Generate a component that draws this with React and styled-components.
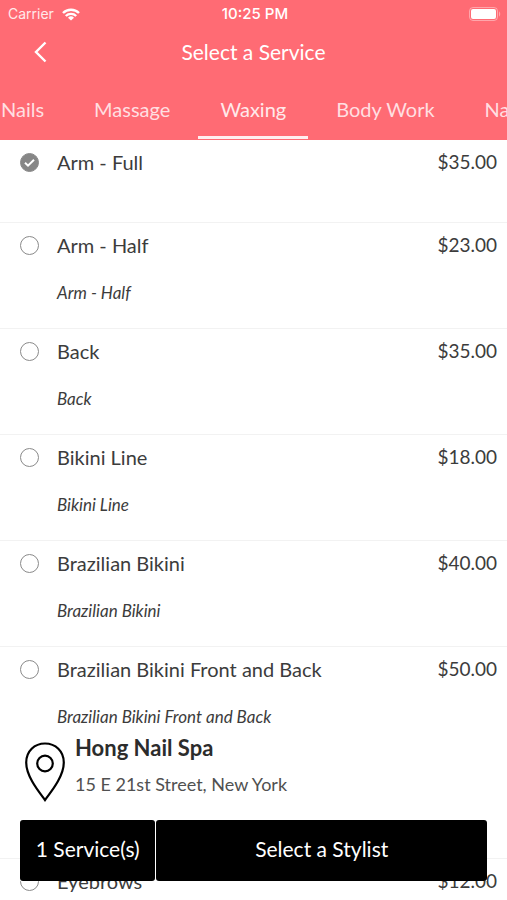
import React, { useLayoutEffect, useRef, useState } from "react";
import styled, { createGlobalStyle } from "styled-components";

const tabs = ["Nails", "Massage", "Waxing", "Body Work", "Nail Art"];

const services = [
  { id: "arm-full", name: "Arm - Full", price: "$35.00" },
  { id: "arm-half", name: "Arm - Half", price: "$23.00", details: "Arm - Half" },
  { id: "back", name: "Back", price: "$35.00", details: "Back" },
  { id: "bikini", name: "Bikini Line", price: "$18.00", details: "Bikini Line" },
  { id: "brazilian", name: "Brazilian Bikini", price: "$40.00", details: "Brazilian Bikini" },
  {
    id: "brazilian-fb",
    name: "Brazilian Bikini Front and Back",
    price: "$50.00",
    details: "Brazilian Bikini Front and Back",
  },
  { id: "chest", name: "Chest", price: "$35.00", details: "Chest" },
  { id: "eyebrows", name: "Eyebrows", price: "$12.00", details: "Eyebrows" },
];

export default function App() {
  const [activeTab, setActiveTab] = useState("Waxing");
  const [selected, setSelected] = useState(["arm-full"]);
  const tabsRef = useRef(null);

  // keep the active tab in the middle of the strip
  useLayoutEffect(() => {
    const strip = tabsRef.current;
    const tab = strip.querySelector("[aria-selected='true']");
    const stripBox = strip.getBoundingClientRect();
    const tabBox = tab.getBoundingClientRect();
    strip.scrollLeft +=
      tabBox.left + tabBox.width / 2 - (stripBox.left + stripBox.width / 2);
  }, [activeTab]);

  const toggle = (id) =>
    setSelected((prev) =>
      prev.includes(id) ? prev.filter((item) => item !== id) : [...prev, id]
    );

  return (
    <Screen>
      <GlobalStyle />
      <Header>
        <StatusBar>
          <Carrier>
            Carrier
            <WifiIcon />
          </Carrier>
          <Time>10:25 PM</Time>
          <BatteryIcon />
        </StatusBar>
        <TitleBar>
          <BackButton type='button' aria-label='Back'>
            <svg width='14' height='22' viewBox='0 0 14 22' fill='none'>
              <path d='M12.5 1.5L3 11l9.5 9.5' stroke='currentColor' strokeWidth='2.4' />
            </svg>
          </BackButton>
          <Title>Select a Service</Title>
        </TitleBar>
        <Tabs role='tablist' ref={tabsRef}>
          {tabs.map((tab) => (
            <Tab
              key={tab}
              type='button'
              role='tab'
              aria-selected={tab === activeTab}
              $active={tab === activeTab}
              onClick={() => setActiveTab(tab)}>
              {tab}
            </Tab>
          ))}
        </Tabs>
      </Header>
      <ServiceList>
        {services.map(({ id, name, price, details }) => (
          <ServiceRow key={id}>
            <ServiceLine>
              <CheckWrap>
                <Check
                  type='checkbox'
                  id={id}
                  checked={selected.includes(id)}
                  onChange={() => toggle(id)}
                />
                {selected.includes(id) && <Tick />}
              </CheckWrap>
              <ServiceName htmlFor={id}>{name}</ServiceName>
              <Price>{price}</Price>
            </ServiceLine>
            {details && <Details>{details}</Details>}
          </ServiceRow>
        ))}
      </ServiceList>
      <Footer>
        <Salon>
          <PinIcon />
          <div>
            <SalonName>Hong Nail Spa</SalonName>
            <Address>15 E 21st Street, New York</Address>
          </div>
        </Salon>
        <Actions>
          <ActionButton type='button'>{selected.length} Service(s)</ActionButton>
          <ActionButton type='button'>Select a Stylist</ActionButton>
        </Actions>
      </Footer>
    </Screen>
  );
}

function WifiIcon() {
  return (
    <svg width='18' height='13' viewBox='0 0 18 13' fill='none'>
      <path d='M1 5a11.3 11.3 0 0 1 16 0' stroke='#fff' strokeWidth='2.4' />
      <path d='M3.8 8a7.4 7.4 0 0 1 10.4 0' stroke='#fff' strokeWidth='2.4' />
      <path d='M9 12.6L6 9.8a4.3 4.3 0 0 1 6 0z' fill='#fff' />
    </svg>
  );
}

function BatteryIcon() {
  return (
    <Battery width='33' height='14' viewBox='0 0 33 14'>
      <rect x='0.5' y='0.5' width='28' height='13' rx='3.5' fill='none' stroke='#fff' strokeOpacity='0.4' />
      <rect x='2' y='2' width='25' height='10' rx='2' fill='#fff' />
      <path d='M30 4.5c1.6.6 1.6 4.4 0 5z' fill='#fff' fillOpacity='0.4' />
    </Battery>
  );
}

function Tick() {
  return (
    <TickMark width='19' height='19' viewBox='0 0 19 19' fill='none'>
      <path d='M5 9.8l3 2.9 6-6' stroke='#fff' strokeWidth='2' />
    </TickMark>
  );
}

function PinIcon() {
  return (
    <svg width='40' height='60' viewBox='0 0 40 60' fill='none' stroke='#000'>
      <path
        d='M20 58C15 51 1.2 35 1.2 20.5 1.2 9 9.5 1.5 20 1.5S38.8 9 38.8 20.5C38.8 35 25 51 20 58z'
        strokeWidth='2.2'
      />
      <circle cx='20' cy='21.5' r='7.8' strokeWidth='2.2' />
    </svg>
  );
}

const GlobalStyle = createGlobalStyle`
  * {
    box-sizing: border-box;
  }

  body {
    margin: 0;
    background: #fff;
    color: #3c3c3c;
    font-family: Lato, "Liberation Sans", sans-serif;
    font-size: 20px;
    line-height: 24px;
  }

  button {
    font: inherit;
    border: 0;
    cursor: pointer;
  }
`;

const Screen = styled.div`
  height: 100vh;
  display: flex;
  flex-direction: column;
`;

const Header = styled.header`
  flex: none;
  background: #ff6b74;
  color: #fff;
`;

const StatusBar = styled.div`
  display: grid;
  grid-template-columns: 1fr auto 1fr;
  align-items: center;
  height: 28px;
  padding: 0 5px 0 8px;
  font-family: Inter, "Liberation Sans", sans-serif;
  font-size: 14px;
`;

const Carrier = styled.span`
  display: flex;
  align-items: center;
  gap: 8px;
  color: #ffe9ea;
`;

const Time = styled.span`
  font-size: 15px;
  font-weight: 500;
`;

const Battery = styled.svg`
  justify-self: end;
`;

const TitleBar = styled.div`
  display: grid;
  grid-template-columns: 1fr auto 1fr;
  align-items: center;
  height: 47px;
  padding: 0 25px;
`;

const BackButton = styled.button`
  justify-self: start;
  display: flex;
  padding: 8px;
  background: none;
  color: inherit;
`;

const Title = styled.h1`
  margin: 0;
  font-size: 21px;
  font-weight: 400;
`;

const Tabs = styled.div`
  display: flex;
  gap: 6px;
  padding-bottom: 1px;
  overflow-x: auto;
  scrollbar-width: none;
`;

const Tab = styled.button`
  flex: none;
  height: 64px;
  padding: 7px 22px 0;
  background: none;
  color: ${({ $active }) => ($active ? "#ffe9ea" : "#ffdfe1")};
  border-bottom: 3px solid ${({ $active }) => ($active ? "#ffeff0" : "transparent")};
`;

const ServiceList = styled.ul`
  flex: 1;
  min-height: 0;
  margin: 0;
  padding: 0 0 160px;
  overflow-y: auto;
  scrollbar-width: none;
  list-style: none;
`;

const ServiceRow = styled.li`
  padding: 10px 10px 23px 20px;
  border-bottom: 1px solid #f2f2f2;

  &:first-child {
    padding-bottom: 48px;
  }
`;

const ServiceLine = styled.div`
  display: flex;
  align-items: center;
`;

const CheckWrap = styled.span`
  position: relative;
  display: flex;
  margin-right: 18px;
`;

const Check = styled.input`
  appearance: none;
  width: 19px;
  height: 19px;
  margin: 0;
  border: 1px solid #8a8a8a;
  border-radius: 50%;

  &:checked {
    background: #868686;
  }
`;

const TickMark = styled.svg`
  position: absolute;
  inset: 0;
  pointer-events: none;
`;

const ServiceName = styled.label`
  flex: 1;
`;

const Price = styled.span`
  margin-left: 12px;
  font-size: 19px;
`;

const Details = styled.p`
  margin: 24px 0 0 37px;
  font-size: 17px;
  font-style: italic;
`;

const Footer = styled.footer`
  position: fixed;
  right: 0;
  bottom: 19px;
  left: 0;
`;

const Salon = styled.div`
  display: flex;
  gap: 10px;
  padding: 6px 25px 18px;
  background: #fff;

  svg {
    margin-top: 6px;
  }
`;

const SalonName = styled.h2`
  margin: 0 0 12px;
  font-size: 22px;
  line-height: 24px;
  color: #2c2c2c;
`;

const Address = styled.p`
  margin: 0;
  font-size: 18px;
  color: #505050;
`;

const Actions = styled.div`
  display: grid;
  grid-template-columns: 29% 1fr;
  gap: 1px;
  margin: 0 20px;
  background: #fff;
`;

const ActionButton = styled.button`
  height: 61px;
  padding: 0 8px 3px;
  border-radius: 3px;
  background: #000;
  color: #fff;
  font-size: 21px;
  white-space: nowrap;
`;
